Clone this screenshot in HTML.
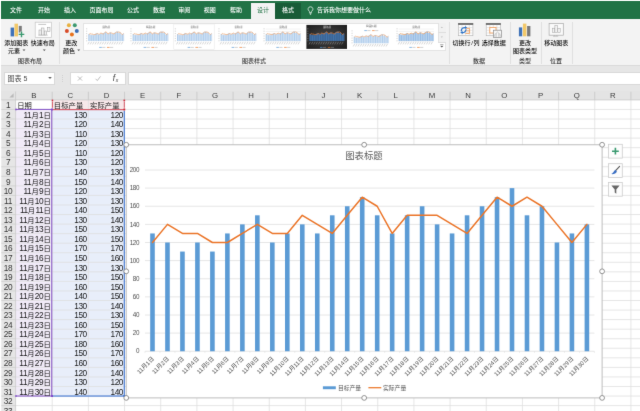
<!DOCTYPE html>
<html lang="zh-CN">
<head>
<meta charset="utf-8">
<title>Excel 图表</title>
<style>
html,body{margin:0;padding:0;background:#fff;}
body{width:640px;height:411px;overflow:hidden;position:relative;font-family:"Liberation Sans","Noto Sans CJK SC",sans-serif;color:#333;}
div{position:absolute;box-sizing:border-box;white-space:nowrap;}
.t{font-size:6px;line-height:8px;height:8px;text-align:center;}
.tab{color:#fff;top:6px;font-weight:500;}
.rb{color:#111;font-weight:500;}
.gl{color:#3a3a3a;font-weight:500;}
.ch{font-size:7.8px;line-height:9px;height:9px;text-align:center;color:#3a3a3a;top:91.4px;}
.rn{font-size:8.3px;letter-spacing:-0.4px;line-height:9.5px;height:9.5px;text-align:center;color:#333;left:1.2px;width:13.6px;}
.c{font-size:7.3px;line-height:9.5px;height:9.5px;color:#151515;}
.n{font-size:8.3px;letter-spacing:-0.45px;}
.k{font-size:7.3px;letter-spacing:0.3px;margin-left:0.2px;}
.r{text-align:right;}
.sep{width:1px;background:#e0e0e0;top:22px;height:41.5px;}
#w{left:-8px;top:-8px;width:656px;height:427px;overflow:hidden;background:#fff;will-change:transform;filter:url(#bf);}
#v{left:8px;top:8px;width:640px;height:411px;}
svg{position:absolute;left:0;top:0;}
svg text{font-family:"Liberation Sans","Noto Sans CJK SC",sans-serif;}
</style>
</head>
<body>
<svg width="0" height="0" style="position:absolute"><filter id="bf" x="0" y="0" width="100%" height="100%" color-interpolation-filters="sRGB"><feConvolveMatrix order="3" kernelMatrix="0.0064 0.0672 0.0064 0.0672 0.7056 0.0672 0.0064 0.0672 0.0064" divisor="1" edgeMode="duplicate" preserveAlpha="true"/></filter></svg>
<div id="w"><div id="v">

<div style="left:1.3px;top:1px;width:650px;height:17.8px;background:#217346"></div>
<div class="t tab" style="left:-4.0px;width:40px">文件</div>
<div class="t tab" style="left:24.0px;width:40px">开始</div>
<div class="t tab" style="left:50.0px;width:40px">插入</div>
<div class="t tab" style="left:81.5px;width:40px">页面布局</div>
<div class="t tab" style="left:113.0px;width:40px">公式</div>
<div class="t tab" style="left:139.0px;width:40px">数据</div>
<div class="t tab" style="left:164.3px;width:40px">审阅</div>
<div class="t tab" style="left:189.7px;width:40px">视图</div>
<div class="t tab" style="left:216.0px;width:40px">帮助</div>
<div style="left:250.6px;top:3px;width:24.6px;height:16px;background:#f3f3f3"></div>
<div class="t" style="left:243px;width:40px;top:6px;color:#217346">设计</div>
<div style="left:275.2px;top:3px;width:25.4px;height:15.8px;background:#185c37"></div>
<div class="t tab" style="left:268px;width:40px">格式</div>
<div class="t tab" style="left:317px;width:70px;text-align:left">告诉我你想要做什么</div>
<div style="left:1.3px;top:18.8px;width:650px;height:47px;background:#f3f3f3"></div>
<div style="left:1.3px;top:65.6px;width:650px;height:34.3px;background:#e6e6e6"></div>
<div style="left:1.3px;top:90.8px;width:650px;height:9.1px;background:#e4e4e4"></div>
<div style="left:1.3px;top:65.2px;width:650px;height:1px;background:#dadada"></div>
<div class="sep" style="left:58.7px"></div>
<div class="sep" style="left:449.4px"></div>
<div class="sep" style="left:509.7px"></div>
<div class="sep" style="left:540.6px"></div>
<div class="sep" style="left:571.9px"></div>
<div class="t rb" style="left:-13.8px;top:39.0px;width:60px">添加图表</div>
<div class="t rb" style="left:-16.0px;top:46.6px;width:60px">元素</div>
<div class="t rb" style="left:12.8px;top:39.0px;width:60px">快速布局</div>
<div class="t gl" style="left:0.0px;top:56.6px;width:60px">图表布局</div>
<div class="t rb" style="left:41.3px;top:39.0px;width:60px">更改</div>
<div class="t rb" style="left:39.0px;top:46.6px;width:60px">颜色</div>
<div class="t gl" style="left:224.0px;top:56.6px;width:60px">图表样式</div>
<div class="t rb" style="left:436.0px;top:39.0px;width:60px">切换行<span style="padding:0 0.6px">/</span>列</div>
<div class="t rb" style="left:463.8px;top:39.0px;width:60px">选择数据</div>
<div class="t gl" style="left:449.0px;top:57.0px;width:60px">数据</div>
<div class="t rb" style="left:495.0px;top:39.0px;width:60px">更改</div>
<div class="t rb" style="left:495.0px;top:46.6px;width:60px">图表类型</div>
<div class="t gl" style="left:495.0px;top:57.0px;width:60px">类型</div>
<div class="t rb" style="left:526.2px;top:39.0px;width:60px">移动图表</div>
<div class="t gl" style="left:526.0px;top:57.0px;width:60px">位置</div>
<div style="left:83px;top:22.5px;width:362.6px;height:28.2px;background:#fff;border:1px solid #e3e3e3"></div>
<div style="left:438px;top:22.5px;width:7.6px;height:19.6px;background:#f1f1f1;border-left:1px solid #e3e3e3"></div>
<div style="left:438px;top:32px;width:7.6px;height:1px;background:#dedede"></div>
<div style="left:438px;top:42px;width:7.6px;height:1px;background:#dedede"></div>
<div style="left:4.4px;top:71.5px;width:50.4px;height:13.8px;background:#fff;border:1px solid #d9d9d9"></div>
<div class="c" style="left:7.5px;top:74.2px;font-size:7px;color:#4a4a4a">图表 5</div>
<div style="left:70.4px;top:71.5px;width:55.2px;height:13.8px;background:#fff;border:1px solid #d9d9d9"></div>
<div style="left:127.6px;top:71.5px;width:525px;height:13.8px;background:#fff;border:1px solid #d9d9d9"></div>
<svg width="660" height="430" viewBox="0 0 660 430" style="overflow:visible">
<rect x="1.30" y="99.90" width="14.30" height="330.00" fill="#e6e6e6"/>
<rect x="15.60" y="99.90" width="645.00" height="330.00" fill="#fff"/>
<rect x="52.20" y="99.90" width="72.34" height="9.55" fill="#f8e8ea"/>
<rect x="15.60" y="109.45" width="36.60" height="286.59" fill="#f1ebf8"/>
<rect x="52.20" y="109.45" width="72.34" height="286.59" fill="#e8eefa"/>
<path d="M15.60 109.45H660M15.60 119.01H660M15.60 128.56H660M15.60 138.11H660M15.60 147.67H660M15.60 157.22H660M15.60 166.77H660M15.60 176.32H660M15.60 185.88H660M15.60 195.43H660M15.60 204.98H660M15.60 214.54H660M15.60 224.09H660M15.60 233.64H660M15.60 243.20H660M15.60 252.75H660M15.60 262.30H660M15.60 271.85H660M15.60 281.41H660M15.60 290.96H660M15.60 300.51H660M15.60 310.07H660M15.60 319.62H660M15.60 329.17H660M15.60 338.73H660M15.60 348.28H660M15.60 357.83H660M15.60 367.38H660M15.60 376.94H660M15.60 386.49H660M15.60 396.04H660M15.60 405.60H660M15.60 415.15H660M15.60 424.70H660" stroke="#dedede" stroke-width="0.75" fill="none"/>
<path d="M52.20 99.90V430M88.37 99.90V430M124.54 99.90V430M160.71 99.90V430M196.88 99.90V430M233.05 99.90V430M269.22 99.90V430M305.39 99.90V430M341.56 99.90V430M377.73 99.90V430M413.90 99.90V430M450.07 99.90V430M486.24 99.90V430M522.41 99.90V430M558.58 99.90V430M594.75 99.90V430M630.92 99.90V430M667.09 99.90V430" stroke="#dedede" stroke-width="0.75" fill="none"/>
<path d="M1.3 109.45H15.60M1.3 119.01H15.60M1.3 128.56H15.60M1.3 138.11H15.60M1.3 147.67H15.60M1.3 157.22H15.60M1.3 166.77H15.60M1.3 176.32H15.60M1.3 185.88H15.60M1.3 195.43H15.60M1.3 204.98H15.60M1.3 214.54H15.60M1.3 224.09H15.60M1.3 233.64H15.60M1.3 243.20H15.60M1.3 252.75H15.60M1.3 262.30H15.60M1.3 271.85H15.60M1.3 281.41H15.60M1.3 290.96H15.60M1.3 300.51H15.60M1.3 310.07H15.60M1.3 319.62H15.60M1.3 329.17H15.60M1.3 338.73H15.60M1.3 348.28H15.60M1.3 357.83H15.60M1.3 367.38H15.60M1.3 376.94H15.60M1.3 386.49H15.60M1.3 396.04H15.60M1.3 405.60H15.60M1.3 415.15H15.60M1.3 424.70H15.60" stroke="#cccccc" stroke-width="0.7" fill="none"/>
<path d="M15.60 91.50V430" stroke="#c6c6c6" stroke-width="0.8" fill="none"/>
<path d="M52.20 91.8V99.90M88.37 91.8V99.90M124.54 91.8V99.90M160.71 91.8V99.90M196.88 91.8V99.90M233.05 91.8V99.90M269.22 91.8V99.90M305.39 91.8V99.90M341.56 91.8V99.90M377.73 91.8V99.90M413.90 91.8V99.90M450.07 91.8V99.90M486.24 91.8V99.90M522.41 91.8V99.90M558.58 91.8V99.90M594.75 91.8V99.90M630.92 91.8V99.90M667.09 91.8V99.90" stroke="#c4c4c4" stroke-width="0.75" fill="none"/>
<path d="M1.3 99.90H660" stroke="#c8c8c8" stroke-width="0.8" fill="none"/>
<rect x="15.60" y="108.90" width="36.60" height="1.10" fill="#8b5ec9"/>
<rect x="51.20" y="109.45" width="1.10" height="286.59" fill="#8b5ec9"/>
<rect x="15.60" y="395.49" width="36.60" height="1.10" fill="#8b5ec9"/>
<rect x="52.20" y="109.00" width="72.34" height="1.20" fill="#d65f6c"/>
<rect x="51.90" y="101.60" width="1.05" height="6.15" fill="#d65f6c"/>
<rect x="123.79" y="101.60" width="1.05" height="6.15" fill="#d65f6c"/>
<rect x="123.74" y="110.85" width="1.10" height="285.19" fill="#4278d4"/>
<rect x="52.20" y="395.49" width="72.34" height="1.10" fill="#4278d4"/>
<rect x="51.10" y="108.50" width="1.90" height="1.90" fill="#7d45c9"/>
<rect x="15.40" y="108.60" width="1.20" height="1.70" fill="#7d45c9"/>
<rect x="51.10" y="395.09" width="1.90" height="1.90" fill="#7d45c9"/>
<rect x="15.40" y="395.19" width="1.20" height="1.70" fill="#7d45c9"/>
<rect x="51.70" y="99.60" width="1.50" height="1.60" fill="#cf2f3f"/>
<rect x="123.44" y="99.60" width="1.70" height="1.60" fill="#cf2f3f"/>
<rect x="123.44" y="108.50" width="1.80" height="1.90" fill="#cf1f30"/>
<rect x="123.34" y="395.04" width="1.90" height="1.90" fill="#3b6fd0"/>
</svg>
<div class="ch" style="left:15.6px;width:36.6px">B</div>
<div class="ch" style="left:52.2px;width:36.2px">C</div>
<div class="ch" style="left:88.4px;width:36.2px">D</div>
<div class="ch" style="left:124.5px;width:36.2px">E</div>
<div class="ch" style="left:160.7px;width:36.2px">F</div>
<div class="ch" style="left:196.9px;width:36.2px">G</div>
<div class="ch" style="left:233.1px;width:36.2px">H</div>
<div class="ch" style="left:269.2px;width:36.2px">I</div>
<div class="ch" style="left:305.4px;width:36.2px">J</div>
<div class="ch" style="left:341.6px;width:36.2px">K</div>
<div class="ch" style="left:377.7px;width:36.2px">L</div>
<div class="ch" style="left:413.9px;width:36.2px">M</div>
<div class="ch" style="left:450.1px;width:36.2px">N</div>
<div class="ch" style="left:486.2px;width:36.2px">O</div>
<div class="ch" style="left:522.4px;width:36.2px">P</div>
<div class="ch" style="left:558.6px;width:36.2px">Q</div>
<div class="ch" style="left:594.8px;width:36.2px">R</div>
<div class="rn" style="top:101.10px">1</div>
<div class="rn" style="top:110.65px">2</div>
<div class="rn" style="top:120.21px">3</div>
<div class="rn" style="top:129.76px">4</div>
<div class="rn" style="top:139.31px">5</div>
<div class="rn" style="top:148.87px">6</div>
<div class="rn" style="top:158.42px">7</div>
<div class="rn" style="top:167.97px">8</div>
<div class="rn" style="top:177.52px">9</div>
<div class="rn" style="top:187.08px">10</div>
<div class="rn" style="top:196.63px">11</div>
<div class="rn" style="top:206.18px">12</div>
<div class="rn" style="top:215.74px">13</div>
<div class="rn" style="top:225.29px">14</div>
<div class="rn" style="top:234.84px">15</div>
<div class="rn" style="top:244.40px">16</div>
<div class="rn" style="top:253.95px">17</div>
<div class="rn" style="top:263.50px">18</div>
<div class="rn" style="top:273.05px">19</div>
<div class="rn" style="top:282.61px">20</div>
<div class="rn" style="top:292.16px">21</div>
<div class="rn" style="top:301.71px">22</div>
<div class="rn" style="top:311.27px">23</div>
<div class="rn" style="top:320.82px">24</div>
<div class="rn" style="top:330.37px">25</div>
<div class="rn" style="top:339.93px">26</div>
<div class="rn" style="top:349.48px">27</div>
<div class="rn" style="top:359.03px">28</div>
<div class="rn" style="top:368.58px">29</div>
<div class="rn" style="top:378.14px">30</div>
<div class="rn" style="top:387.69px">31</div>
<div class="rn" style="top:397.24px">32</div>
<div class="rn" style="top:406.80px">33</div>
<div class="c" style="left:17.3px;top:101.10px">日期</div>
<div class="c" style="left:53.8px;top:101.10px;letter-spacing:0.1px">目标产量</div>
<div class="c" style="left:90.0px;top:101.10px;letter-spacing:0.1px">实际产量</div>
<div class="c n r" style="left:15.6px;width:35.4px;top:110.65px">11<span class="k">月</span>1<span class="k">日</span></div>
<div class="c n r" style="left:52.2px;width:34.6px;top:110.65px">130</div>
<div class="c n r" style="left:88.4px;width:34.6px;top:110.65px">120</div>
<div class="c n r" style="left:15.6px;width:35.4px;top:120.21px">11<span class="k">月</span>2<span class="k">日</span></div>
<div class="c n r" style="left:52.2px;width:34.6px;top:120.21px">120</div>
<div class="c n r" style="left:88.4px;width:34.6px;top:120.21px">140</div>
<div class="c n r" style="left:15.6px;width:35.4px;top:129.76px">11<span class="k">月</span>3<span class="k">日</span></div>
<div class="c n r" style="left:52.2px;width:34.6px;top:129.76px">110</div>
<div class="c n r" style="left:88.4px;width:34.6px;top:129.76px">130</div>
<div class="c n r" style="left:15.6px;width:35.4px;top:139.31px">11<span class="k">月</span>4<span class="k">日</span></div>
<div class="c n r" style="left:52.2px;width:34.6px;top:139.31px">120</div>
<div class="c n r" style="left:88.4px;width:34.6px;top:139.31px">130</div>
<div class="c n r" style="left:15.6px;width:35.4px;top:148.87px">11<span class="k">月</span>5<span class="k">日</span></div>
<div class="c n r" style="left:52.2px;width:34.6px;top:148.87px">110</div>
<div class="c n r" style="left:88.4px;width:34.6px;top:148.87px">120</div>
<div class="c n r" style="left:15.6px;width:35.4px;top:158.42px">11<span class="k">月</span>6<span class="k">日</span></div>
<div class="c n r" style="left:52.2px;width:34.6px;top:158.42px">130</div>
<div class="c n r" style="left:88.4px;width:34.6px;top:158.42px">120</div>
<div class="c n r" style="left:15.6px;width:35.4px;top:167.97px">11<span class="k">月</span>7<span class="k">日</span></div>
<div class="c n r" style="left:52.2px;width:34.6px;top:167.97px">140</div>
<div class="c n r" style="left:88.4px;width:34.6px;top:167.97px">130</div>
<div class="c n r" style="left:15.6px;width:35.4px;top:177.52px">11<span class="k">月</span>8<span class="k">日</span></div>
<div class="c n r" style="left:52.2px;width:34.6px;top:177.52px">150</div>
<div class="c n r" style="left:88.4px;width:34.6px;top:177.52px">140</div>
<div class="c n r" style="left:15.6px;width:35.4px;top:187.08px">11<span class="k">月</span>9<span class="k">日</span></div>
<div class="c n r" style="left:52.2px;width:34.6px;top:187.08px">120</div>
<div class="c n r" style="left:88.4px;width:34.6px;top:187.08px">130</div>
<div class="c n r" style="left:15.6px;width:35.4px;top:196.63px">11<span class="k">月</span>10<span class="k">日</span></div>
<div class="c n r" style="left:52.2px;width:34.6px;top:196.63px">130</div>
<div class="c n r" style="left:88.4px;width:34.6px;top:196.63px">130</div>
<div class="c n r" style="left:15.6px;width:35.4px;top:206.18px">11<span class="k">月</span>11<span class="k">日</span></div>
<div class="c n r" style="left:52.2px;width:34.6px;top:206.18px">140</div>
<div class="c n r" style="left:88.4px;width:34.6px;top:206.18px">150</div>
<div class="c n r" style="left:15.6px;width:35.4px;top:215.74px">11<span class="k">月</span>12<span class="k">日</span></div>
<div class="c n r" style="left:52.2px;width:34.6px;top:215.74px">130</div>
<div class="c n r" style="left:88.4px;width:34.6px;top:215.74px">140</div>
<div class="c n r" style="left:15.6px;width:35.4px;top:225.29px">11<span class="k">月</span>13<span class="k">日</span></div>
<div class="c n r" style="left:52.2px;width:34.6px;top:225.29px">150</div>
<div class="c n r" style="left:88.4px;width:34.6px;top:225.29px">130</div>
<div class="c n r" style="left:15.6px;width:35.4px;top:234.84px">11<span class="k">月</span>14<span class="k">日</span></div>
<div class="c n r" style="left:52.2px;width:34.6px;top:234.84px">160</div>
<div class="c n r" style="left:88.4px;width:34.6px;top:234.84px">150</div>
<div class="c n r" style="left:15.6px;width:35.4px;top:244.40px">11<span class="k">月</span>15<span class="k">日</span></div>
<div class="c n r" style="left:52.2px;width:34.6px;top:244.40px">170</div>
<div class="c n r" style="left:88.4px;width:34.6px;top:244.40px">170</div>
<div class="c n r" style="left:15.6px;width:35.4px;top:253.95px">11<span class="k">月</span>16<span class="k">日</span></div>
<div class="c n r" style="left:52.2px;width:34.6px;top:253.95px">150</div>
<div class="c n r" style="left:88.4px;width:34.6px;top:253.95px">160</div>
<div class="c n r" style="left:15.6px;width:35.4px;top:263.50px">11<span class="k">月</span>17<span class="k">日</span></div>
<div class="c n r" style="left:52.2px;width:34.6px;top:263.50px">130</div>
<div class="c n r" style="left:88.4px;width:34.6px;top:263.50px">130</div>
<div class="c n r" style="left:15.6px;width:35.4px;top:273.05px">11<span class="k">月</span>18<span class="k">日</span></div>
<div class="c n r" style="left:52.2px;width:34.6px;top:273.05px">150</div>
<div class="c n r" style="left:88.4px;width:34.6px;top:273.05px">150</div>
<div class="c n r" style="left:15.6px;width:35.4px;top:282.61px">11<span class="k">月</span>19<span class="k">日</span></div>
<div class="c n r" style="left:52.2px;width:34.6px;top:282.61px">160</div>
<div class="c n r" style="left:88.4px;width:34.6px;top:282.61px">150</div>
<div class="c n r" style="left:15.6px;width:35.4px;top:292.16px">11<span class="k">月</span>20<span class="k">日</span></div>
<div class="c n r" style="left:52.2px;width:34.6px;top:292.16px">140</div>
<div class="c n r" style="left:88.4px;width:34.6px;top:292.16px">150</div>
<div class="c n r" style="left:15.6px;width:35.4px;top:301.71px">11<span class="k">月</span>21<span class="k">日</span></div>
<div class="c n r" style="left:52.2px;width:34.6px;top:301.71px">130</div>
<div class="c n r" style="left:88.4px;width:34.6px;top:301.71px">140</div>
<div class="c n r" style="left:15.6px;width:35.4px;top:311.27px">11<span class="k">月</span>22<span class="k">日</span></div>
<div class="c n r" style="left:52.2px;width:34.6px;top:311.27px">150</div>
<div class="c n r" style="left:88.4px;width:34.6px;top:311.27px">130</div>
<div class="c n r" style="left:15.6px;width:35.4px;top:320.82px">11<span class="k">月</span>23<span class="k">日</span></div>
<div class="c n r" style="left:52.2px;width:34.6px;top:320.82px">160</div>
<div class="c n r" style="left:88.4px;width:34.6px;top:320.82px">150</div>
<div class="c n r" style="left:15.6px;width:35.4px;top:330.37px">11<span class="k">月</span>24<span class="k">日</span></div>
<div class="c n r" style="left:52.2px;width:34.6px;top:330.37px">170</div>
<div class="c n r" style="left:88.4px;width:34.6px;top:330.37px">170</div>
<div class="c n r" style="left:15.6px;width:35.4px;top:339.93px">11<span class="k">月</span>25<span class="k">日</span></div>
<div class="c n r" style="left:52.2px;width:34.6px;top:339.93px">180</div>
<div class="c n r" style="left:88.4px;width:34.6px;top:339.93px">160</div>
<div class="c n r" style="left:15.6px;width:35.4px;top:349.48px">11<span class="k">月</span>26<span class="k">日</span></div>
<div class="c n r" style="left:52.2px;width:34.6px;top:349.48px">150</div>
<div class="c n r" style="left:88.4px;width:34.6px;top:349.48px">170</div>
<div class="c n r" style="left:15.6px;width:35.4px;top:359.03px">11<span class="k">月</span>27<span class="k">日</span></div>
<div class="c n r" style="left:52.2px;width:34.6px;top:359.03px">160</div>
<div class="c n r" style="left:88.4px;width:34.6px;top:359.03px">160</div>
<div class="c n r" style="left:15.6px;width:35.4px;top:368.58px">11<span class="k">月</span>28<span class="k">日</span></div>
<div class="c n r" style="left:52.2px;width:34.6px;top:368.58px">120</div>
<div class="c n r" style="left:88.4px;width:34.6px;top:368.58px">140</div>
<div class="c n r" style="left:15.6px;width:35.4px;top:378.14px">11<span class="k">月</span>29<span class="k">日</span></div>
<div class="c n r" style="left:52.2px;width:34.6px;top:378.14px">130</div>
<div class="c n r" style="left:88.4px;width:34.6px;top:378.14px">120</div>
<div class="c n r" style="left:15.6px;width:35.4px;top:387.69px">11<span class="k">月</span>30<span class="k">日</span></div>
<div class="c n r" style="left:52.2px;width:34.6px;top:387.69px">140</div>
<div class="c n r" style="left:88.4px;width:34.6px;top:387.69px">140</div>
<svg width="640" height="411" viewBox="0 0 640 411">
<rect x="126.25" y="144.75" width="475.85" height="253.15" fill="#fff" stroke="#bdbdbd" stroke-width="1"/>
<line x1="145.0" x2="594.4" y1="351.25" y2="351.25" stroke="#e6e6e6" stroke-width="1"/>
<text x="139.1" y="353.45" font-size="6.3" letter-spacing="-0.35" fill="#4f4f4f" text-anchor="end">0</text>
<line x1="145.0" x2="594.4" y1="333.12" y2="333.12" stroke="#e6e6e6" stroke-width="1"/>
<text x="139.1" y="335.32" font-size="6.3" letter-spacing="-0.35" fill="#4f4f4f" text-anchor="end">20</text>
<line x1="145.0" x2="594.4" y1="315.00" y2="315.00" stroke="#e6e6e6" stroke-width="1"/>
<text x="139.1" y="317.20" font-size="6.3" letter-spacing="-0.35" fill="#4f4f4f" text-anchor="end">40</text>
<line x1="145.0" x2="594.4" y1="296.88" y2="296.88" stroke="#e6e6e6" stroke-width="1"/>
<text x="139.1" y="299.07" font-size="6.3" letter-spacing="-0.35" fill="#4f4f4f" text-anchor="end">60</text>
<line x1="145.0" x2="594.4" y1="278.75" y2="278.75" stroke="#e6e6e6" stroke-width="1"/>
<text x="139.1" y="280.95" font-size="6.3" letter-spacing="-0.35" fill="#4f4f4f" text-anchor="end">80</text>
<line x1="145.0" x2="594.4" y1="260.62" y2="260.62" stroke="#e6e6e6" stroke-width="1"/>
<text x="139.1" y="262.82" font-size="6.3" letter-spacing="-0.35" fill="#4f4f4f" text-anchor="end">100</text>
<line x1="145.0" x2="594.4" y1="242.50" y2="242.50" stroke="#e6e6e6" stroke-width="1"/>
<text x="139.1" y="244.70" font-size="6.3" letter-spacing="-0.35" fill="#4f4f4f" text-anchor="end">120</text>
<line x1="145.0" x2="594.4" y1="224.38" y2="224.38" stroke="#e6e6e6" stroke-width="1"/>
<text x="139.1" y="226.57" font-size="6.3" letter-spacing="-0.35" fill="#4f4f4f" text-anchor="end">140</text>
<line x1="145.0" x2="594.4" y1="206.25" y2="206.25" stroke="#e6e6e6" stroke-width="1"/>
<text x="139.1" y="208.45" font-size="6.3" letter-spacing="-0.35" fill="#4f4f4f" text-anchor="end">160</text>
<line x1="145.0" x2="594.4" y1="188.12" y2="188.12" stroke="#e6e6e6" stroke-width="1"/>
<text x="139.1" y="190.32" font-size="6.3" letter-spacing="-0.35" fill="#4f4f4f" text-anchor="end">180</text>
<line x1="145.0" x2="594.4" y1="170.00" y2="170.00" stroke="#e6e6e6" stroke-width="1"/>
<text x="139.1" y="172.20" font-size="6.3" letter-spacing="-0.35" fill="#4f4f4f" text-anchor="end">200</text>
<rect x="150.19" y="233.44" width="4.6" height="117.81" fill="#5b9bd5"/>
<rect x="165.17" y="242.50" width="4.6" height="108.75" fill="#5b9bd5"/>
<rect x="180.15" y="251.56" width="4.6" height="99.69" fill="#5b9bd5"/>
<rect x="195.13" y="242.50" width="4.6" height="108.75" fill="#5b9bd5"/>
<rect x="210.11" y="251.56" width="4.6" height="99.69" fill="#5b9bd5"/>
<rect x="225.09" y="233.44" width="4.6" height="117.81" fill="#5b9bd5"/>
<rect x="240.07" y="224.38" width="4.6" height="126.88" fill="#5b9bd5"/>
<rect x="255.05" y="215.31" width="4.6" height="135.94" fill="#5b9bd5"/>
<rect x="270.03" y="242.50" width="4.6" height="108.75" fill="#5b9bd5"/>
<rect x="285.01" y="233.44" width="4.6" height="117.81" fill="#5b9bd5"/>
<rect x="299.99" y="224.38" width="4.6" height="126.88" fill="#5b9bd5"/>
<rect x="314.97" y="233.44" width="4.6" height="117.81" fill="#5b9bd5"/>
<rect x="329.95" y="215.31" width="4.6" height="135.94" fill="#5b9bd5"/>
<rect x="344.93" y="206.25" width="4.6" height="145.00" fill="#5b9bd5"/>
<rect x="359.91" y="197.19" width="4.6" height="154.06" fill="#5b9bd5"/>
<rect x="374.89" y="215.31" width="4.6" height="135.94" fill="#5b9bd5"/>
<rect x="389.87" y="233.44" width="4.6" height="117.81" fill="#5b9bd5"/>
<rect x="404.85" y="215.31" width="4.6" height="135.94" fill="#5b9bd5"/>
<rect x="419.83" y="206.25" width="4.6" height="145.00" fill="#5b9bd5"/>
<rect x="434.81" y="224.38" width="4.6" height="126.88" fill="#5b9bd5"/>
<rect x="449.79" y="233.44" width="4.6" height="117.81" fill="#5b9bd5"/>
<rect x="464.77" y="215.31" width="4.6" height="135.94" fill="#5b9bd5"/>
<rect x="479.75" y="206.25" width="4.6" height="145.00" fill="#5b9bd5"/>
<rect x="494.73" y="197.19" width="4.6" height="154.06" fill="#5b9bd5"/>
<rect x="509.71" y="188.12" width="4.6" height="163.12" fill="#5b9bd5"/>
<rect x="524.69" y="215.31" width="4.6" height="135.94" fill="#5b9bd5"/>
<rect x="539.67" y="206.25" width="4.6" height="145.00" fill="#5b9bd5"/>
<rect x="554.65" y="242.50" width="4.6" height="108.75" fill="#5b9bd5"/>
<rect x="569.63" y="233.44" width="4.6" height="117.81" fill="#5b9bd5"/>
<rect x="584.61" y="224.38" width="4.6" height="126.88" fill="#5b9bd5"/>
<polyline points="152.49,242.50 167.47,224.38 182.45,233.44 197.43,233.44 212.41,242.50 227.39,242.50 242.37,233.44 257.35,224.38 272.33,233.44 287.31,233.44 302.29,215.31 317.27,224.38 332.25,233.44 347.23,215.31 362.21,197.19 377.19,206.25 392.17,233.44 407.15,215.31 422.13,215.31 437.11,215.31 452.09,224.38 467.07,233.44 482.05,215.31 497.03,197.19 512.01,206.25 526.99,197.19 541.97,206.25 556.95,224.38 571.93,242.50 586.91,224.38" fill="none" stroke="#eb7529" stroke-width="1.5" stroke-linejoin="round" stroke-linecap="round"/>
<text transform="translate(154.39,359.20) rotate(-45)" font-size="5.9" fill="#505050" text-anchor="end">11月1日</text>
<text transform="translate(169.37,359.20) rotate(-45)" font-size="5.9" fill="#505050" text-anchor="end">11月2日</text>
<text transform="translate(184.35,359.20) rotate(-45)" font-size="5.9" fill="#505050" text-anchor="end">11月3日</text>
<text transform="translate(199.33,359.20) rotate(-45)" font-size="5.9" fill="#505050" text-anchor="end">11月4日</text>
<text transform="translate(214.31,359.20) rotate(-45)" font-size="5.9" fill="#505050" text-anchor="end">11月5日</text>
<text transform="translate(229.29,359.20) rotate(-45)" font-size="5.9" fill="#505050" text-anchor="end">11月6日</text>
<text transform="translate(244.27,359.20) rotate(-45)" font-size="5.9" fill="#505050" text-anchor="end">11月7日</text>
<text transform="translate(259.25,359.20) rotate(-45)" font-size="5.9" fill="#505050" text-anchor="end">11月8日</text>
<text transform="translate(274.23,359.20) rotate(-45)" font-size="5.9" fill="#505050" text-anchor="end">11月9日</text>
<text transform="translate(289.21,359.20) rotate(-45)" font-size="5.9" fill="#505050" text-anchor="end">11月10日</text>
<text transform="translate(304.19,359.20) rotate(-45)" font-size="5.9" fill="#505050" text-anchor="end">11月11日</text>
<text transform="translate(319.17,359.20) rotate(-45)" font-size="5.9" fill="#505050" text-anchor="end">11月12日</text>
<text transform="translate(334.15,359.20) rotate(-45)" font-size="5.9" fill="#505050" text-anchor="end">11月13日</text>
<text transform="translate(349.13,359.20) rotate(-45)" font-size="5.9" fill="#505050" text-anchor="end">11月14日</text>
<text transform="translate(364.11,359.20) rotate(-45)" font-size="5.9" fill="#505050" text-anchor="end">11月15日</text>
<text transform="translate(379.09,359.20) rotate(-45)" font-size="5.9" fill="#505050" text-anchor="end">11月16日</text>
<text transform="translate(394.07,359.20) rotate(-45)" font-size="5.9" fill="#505050" text-anchor="end">11月17日</text>
<text transform="translate(409.05,359.20) rotate(-45)" font-size="5.9" fill="#505050" text-anchor="end">11月18日</text>
<text transform="translate(424.03,359.20) rotate(-45)" font-size="5.9" fill="#505050" text-anchor="end">11月19日</text>
<text transform="translate(439.01,359.20) rotate(-45)" font-size="5.9" fill="#505050" text-anchor="end">11月20日</text>
<text transform="translate(453.99,359.20) rotate(-45)" font-size="5.9" fill="#505050" text-anchor="end">11月21日</text>
<text transform="translate(468.97,359.20) rotate(-45)" font-size="5.9" fill="#505050" text-anchor="end">11月22日</text>
<text transform="translate(483.95,359.20) rotate(-45)" font-size="5.9" fill="#505050" text-anchor="end">11月23日</text>
<text transform="translate(498.93,359.20) rotate(-45)" font-size="5.9" fill="#505050" text-anchor="end">11月24日</text>
<text transform="translate(513.91,359.20) rotate(-45)" font-size="5.9" fill="#505050" text-anchor="end">11月25日</text>
<text transform="translate(528.89,359.20) rotate(-45)" font-size="5.9" fill="#505050" text-anchor="end">11月26日</text>
<text transform="translate(543.87,359.20) rotate(-45)" font-size="5.9" fill="#505050" text-anchor="end">11月27日</text>
<text transform="translate(558.85,359.20) rotate(-45)" font-size="5.9" fill="#505050" text-anchor="end">11月28日</text>
<text transform="translate(573.83,359.20) rotate(-45)" font-size="5.9" fill="#505050" text-anchor="end">11月29日</text>
<text transform="translate(588.81,359.20) rotate(-45)" font-size="5.9" fill="#505050" text-anchor="end">11月30日</text>
<text x="364" y="159" font-size="9.4" fill="#595959" text-anchor="middle">图表标题</text>
<rect x="322.9" y="386.3" width="12.9" height="2.9" fill="#5b9bd5"/>
<text x="337.9" y="389.9" font-size="5.8" fill="#595959">目标产量</text>
<line x1="368.4" x2="381.3" y1="387.7" y2="387.7" stroke="#ed7d31" stroke-width="1.3"/>
<text x="383" y="389.9" font-size="5.8" fill="#595959">实际产量</text>
<line x1="145.00" x2="145.00" y1="351.25" y2="352.85" stroke="#dedede" stroke-width="0.6"/>
<line x1="159.98" x2="159.98" y1="351.25" y2="352.85" stroke="#dedede" stroke-width="0.6"/>
<line x1="174.96" x2="174.96" y1="351.25" y2="352.85" stroke="#dedede" stroke-width="0.6"/>
<line x1="189.94" x2="189.94" y1="351.25" y2="352.85" stroke="#dedede" stroke-width="0.6"/>
<line x1="204.92" x2="204.92" y1="351.25" y2="352.85" stroke="#dedede" stroke-width="0.6"/>
<line x1="219.90" x2="219.90" y1="351.25" y2="352.85" stroke="#dedede" stroke-width="0.6"/>
<line x1="234.88" x2="234.88" y1="351.25" y2="352.85" stroke="#dedede" stroke-width="0.6"/>
<line x1="249.86" x2="249.86" y1="351.25" y2="352.85" stroke="#dedede" stroke-width="0.6"/>
<line x1="264.84" x2="264.84" y1="351.25" y2="352.85" stroke="#dedede" stroke-width="0.6"/>
<line x1="279.82" x2="279.82" y1="351.25" y2="352.85" stroke="#dedede" stroke-width="0.6"/>
<line x1="294.80" x2="294.80" y1="351.25" y2="352.85" stroke="#dedede" stroke-width="0.6"/>
<line x1="309.78" x2="309.78" y1="351.25" y2="352.85" stroke="#dedede" stroke-width="0.6"/>
<line x1="324.76" x2="324.76" y1="351.25" y2="352.85" stroke="#dedede" stroke-width="0.6"/>
<line x1="339.74" x2="339.74" y1="351.25" y2="352.85" stroke="#dedede" stroke-width="0.6"/>
<line x1="354.72" x2="354.72" y1="351.25" y2="352.85" stroke="#dedede" stroke-width="0.6"/>
<line x1="369.70" x2="369.70" y1="351.25" y2="352.85" stroke="#dedede" stroke-width="0.6"/>
<line x1="384.68" x2="384.68" y1="351.25" y2="352.85" stroke="#dedede" stroke-width="0.6"/>
<line x1="399.66" x2="399.66" y1="351.25" y2="352.85" stroke="#dedede" stroke-width="0.6"/>
<line x1="414.64" x2="414.64" y1="351.25" y2="352.85" stroke="#dedede" stroke-width="0.6"/>
<line x1="429.62" x2="429.62" y1="351.25" y2="352.85" stroke="#dedede" stroke-width="0.6"/>
<line x1="444.60" x2="444.60" y1="351.25" y2="352.85" stroke="#dedede" stroke-width="0.6"/>
<line x1="459.58" x2="459.58" y1="351.25" y2="352.85" stroke="#dedede" stroke-width="0.6"/>
<line x1="474.56" x2="474.56" y1="351.25" y2="352.85" stroke="#dedede" stroke-width="0.6"/>
<line x1="489.54" x2="489.54" y1="351.25" y2="352.85" stroke="#dedede" stroke-width="0.6"/>
<line x1="504.52" x2="504.52" y1="351.25" y2="352.85" stroke="#dedede" stroke-width="0.6"/>
<line x1="519.50" x2="519.50" y1="351.25" y2="352.85" stroke="#dedede" stroke-width="0.6"/>
<line x1="534.48" x2="534.48" y1="351.25" y2="352.85" stroke="#dedede" stroke-width="0.6"/>
<line x1="549.46" x2="549.46" y1="351.25" y2="352.85" stroke="#dedede" stroke-width="0.6"/>
<line x1="564.44" x2="564.44" y1="351.25" y2="352.85" stroke="#dedede" stroke-width="0.6"/>
<line x1="579.42" x2="579.42" y1="351.25" y2="352.85" stroke="#dedede" stroke-width="0.6"/>
<line x1="594.40" x2="594.40" y1="351.25" y2="352.85" stroke="#dedede" stroke-width="0.6"/>
<circle cx="126.25" cy="144.75" r="2.4" fill="#fff" stroke="#7a7a7a" stroke-width="0.8"/>
<circle cx="364.18" cy="144.75" r="2.4" fill="#fff" stroke="#7a7a7a" stroke-width="0.8"/>
<circle cx="602.10" cy="144.75" r="2.4" fill="#fff" stroke="#7a7a7a" stroke-width="0.8"/>
<circle cx="126.25" cy="271.32" r="2.4" fill="#fff" stroke="#7a7a7a" stroke-width="0.8"/>
<circle cx="602.10" cy="271.32" r="2.4" fill="#fff" stroke="#7a7a7a" stroke-width="0.8"/>
<circle cx="126.25" cy="397.90" r="2.4" fill="#fff" stroke="#7a7a7a" stroke-width="0.8"/>
<circle cx="364.18" cy="397.90" r="2.4" fill="#fff" stroke="#7a7a7a" stroke-width="0.8"/>
<circle cx="602.10" cy="397.90" r="2.4" fill="#fff" stroke="#7a7a7a" stroke-width="0.8"/>
</svg>
<svg width="640" height="411" viewBox="0 0 640 411">
<path d="M310.5 6.8a2.3 2.3 0 0 1 1.4 4.2c-.3.3-.4.6-.4 1v.6h-2v-.6c0-.4-.1-.7-.4-1a2.3 2.3 0 0 1 1.4-4.2z" fill="none" stroke="#fff" stroke-width="0.7"/>
<path d="M309.6 13.5h1.8M309.9 14.5h1.2" stroke="#fff" stroke-width="0.6" fill="none"/>
<rect x="10.6" y="27.6" width="3.5" height="8.8" fill="#3f72b8"/>
<rect x="14.5" y="23.7" width="3.5" height="12.7" fill="#f2c869"/>
<rect x="18.8" y="25.9" width="3.0" height="6.6" fill="#7a7a7a"/>
<path d="M21.5 31.4v6M18.5 34.4h6" stroke="#f3f3f3" stroke-width="2.6" fill="none"/>
<path d="M21.5 31.6v5.6M18.7 34.4h5.6" stroke="#3a9a70" stroke-width="1.4" fill="none"/>
<rect x="35.2" y="22.2" width="16.4" height="15.4" fill="#fff" stroke="#c4c4c4" stroke-width="0.7"/>
<path d="M38.3 24.4h7.8" stroke="#9a9a9a" stroke-width="0.6"/>
<path d="M38 35.2h10" stroke="#b5b5b5" stroke-width="0.5"/>
<rect x="39.0" y="30.0" width="2.2" height="5.0" fill="#f4f4f4" stroke="#9a9a9a" stroke-width="0.5"/>
<rect x="41.6" y="28.0" width="2.4" height="7.0" fill="#f4f4f4" stroke="#9a9a9a" stroke-width="0.5"/>
<rect x="44.4" y="31.0" width="2.2" height="4.0" fill="#f4f4f4" stroke="#9a9a9a" stroke-width="0.5"/>
<rect x="47.6" y="27.6" width="2.4" height="3.8" fill="#f4f4f4" stroke="#9a9a9a" stroke-width="0.5"/>
<path d="M22.55 49.57h2.90l-1.45 1.45z" fill="#4a4a4a"/>
<path d="M42.85 49.57h2.90l-1.45 1.45z" fill="#4a4a4a"/>
<path d="M77.25 49.57h2.90l-1.45 1.45z" fill="#4a4a4a"/>
<circle cx="68.9" cy="25.3" r="2" fill="#e8b040"/>
<circle cx="74.8" cy="25.3" r="2" fill="#3d9970"/>
<circle cx="66.9" cy="31.1" r="2" fill="#d84a27"/>
<circle cx="76.8" cy="31.1" r="2" fill="#3a6db5"/>
<circle cx="71.9" cy="34.4" r="2" fill="#e8721c"/>
<path d="M440.6 28l1.2-1.2 1.2 1.2z" fill="#bdbdbd"/>
<path d="M440.6 36.6h2.4l-1.2 1.2z" fill="#bdbdbd"/>
<path d="M440.2 44.8h3.2" stroke="#555" stroke-width="0.6"/>
<path d="M440.3 46h3l-1.5 1.6z" fill="#555"/>
<polygon points="88.30,41.10 88.40,34.08 89.40,34.08 89.60,34.62 90.59,34.62 90.79,35.16 91.79,35.16 91.99,34.62 92.99,34.62 93.19,35.16 94.18,35.16 94.38,34.08 95.38,34.08 95.58,33.54 96.58,33.54 96.78,33.00 97.77,33.00 97.97,34.62 98.97,34.62 99.17,34.08 100.17,34.08 100.37,33.54 101.36,33.54 101.56,34.08 102.56,34.08 102.76,33.00 103.76,33.00 103.96,32.46 104.95,32.46 105.15,31.92 106.15,31.92 106.35,33.00 107.35,33.00 107.55,34.08 108.54,34.08 108.74,33.00 109.74,33.00 109.94,32.46 110.94,32.46 111.14,33.54 112.13,33.54 112.33,34.08 113.33,34.08 113.53,33.00 114.53,33.00 114.73,32.46 115.72,32.46 115.92,31.92 116.92,31.92 117.12,31.38 118.12,31.38 118.32,33.00 119.31,33.00 119.51,32.46 120.51,32.46 120.71,34.62 121.71,34.62 121.91,34.08 122.90,34.08 123.10,33.54 124.10,33.54 124.20,41.10" fill="#dce9f7"/>
<path d="M88.90 41.10V34.08M91.29 41.10V35.16M93.69 41.10V35.16M96.08 41.10V33.54M98.47 41.10V34.62M100.86 41.10V33.54M103.26 41.10V33.00M105.65 41.10V31.92M108.05 41.10V34.08M110.44 41.10V32.46M112.83 41.10V34.08M115.22 41.10V32.46M117.62 41.10V31.38M120.01 41.10V32.46M122.41 41.10V34.08" stroke="#a8c8ea" stroke-width="0.9" fill="none"/>
<path d="M90.09 41.10V34.62M92.49 41.10V34.62M94.88 41.10V34.08M97.28 41.10V33.00M99.67 41.10V34.08M102.06 41.10V34.08M104.45 41.10V32.46M106.85 41.10V33.00M109.24 41.10V33.00M111.63 41.10V33.54M114.03 41.10V33.00M116.42 41.10V31.92M118.81 41.10V33.00M121.21 41.10V34.62M123.60 41.10V33.54" stroke="#a8c8ea" stroke-width="0.6" fill="none" opacity="0.55"/>
<polyline points="88.90,34.62 90.09,33.54 91.29,34.08 92.49,34.08 93.69,34.62 94.88,34.62 96.08,34.08 97.28,33.54 98.47,34.08 99.67,34.08 100.86,33.00 102.06,33.54 103.26,34.08 104.45,33.00 105.65,31.92 106.85,32.46 108.05,34.08 109.24,33.00 110.44,33.00 111.63,33.00 112.83,33.54 114.03,34.08 115.22,33.00 116.42,31.92 117.62,32.46 118.81,31.92 120.01,32.46 121.21,33.54 122.41,34.62 123.60,33.54" fill="none" stroke="#f2ab78" stroke-width="0.75" stroke-linejoin="round"/>
<path d="M86.1 40.80h1.1" stroke="#a5a5a5" stroke-width="0.5"/>
<path d="M86.1 38.40h1.1" stroke="#a5a5a5" stroke-width="0.5"/>
<path d="M86.1 36.00h1.1" stroke="#a5a5a5" stroke-width="0.5"/>
<path d="M86.1 33.60h1.1" stroke="#a5a5a5" stroke-width="0.5"/>
<path d="M86.1 31.20h1.1" stroke="#a5a5a5" stroke-width="0.5"/>
<path d="M86.1 28.80h1.1" stroke="#a5a5a5" stroke-width="0.5"/>
<path d="M89.30 41.80l-1.5 2.6M91.69 41.80l-1.5 2.6M94.09 41.80l-1.5 2.6M96.48 41.80l-1.5 2.6M98.87 41.80l-1.5 2.6M101.27 41.80l-1.5 2.6M103.66 41.80l-1.5 2.6M106.05 41.80l-1.5 2.6M108.45 41.80l-1.5 2.6M110.84 41.80l-1.5 2.6M113.23 41.80l-1.5 2.6M115.62 41.80l-1.5 2.6M118.02 41.80l-1.5 2.6M120.41 41.80l-1.5 2.6M122.81 41.80l-1.5 2.6" stroke="#a5a5a5" stroke-width="0.45" fill="none"/>
<text x="106.2" y="27.8" font-size="1.9" font-weight="900" fill="#555" text-anchor="middle" opacity="0.62">图表标题</text>
<path d="M99.2 47.4h2.6" stroke="#5b9bd5" stroke-width="0.7"/>
<path d="M102.2 47.4h3.2" stroke="#a5a5a5" stroke-width="0.5"/>
<path d="M107.0 47.4h2.6" stroke="#ed7d31" stroke-width="0.7"/>
<path d="M110.0 47.4h3.2" stroke="#a5a5a5" stroke-width="0.5"/>
<polygon points="132.60,41.10 132.70,34.08 133.70,34.08 133.90,34.62 134.89,34.62 135.09,35.16 136.09,35.16 136.29,34.62 137.29,34.62 137.49,35.16 138.48,35.16 138.68,34.08 139.68,34.08 139.88,33.54 140.88,33.54 141.08,33.00 142.07,33.00 142.27,34.62 143.27,34.62 143.47,34.08 144.47,34.08 144.67,33.54 145.66,33.54 145.86,34.08 146.86,34.08 147.06,33.00 148.06,33.00 148.26,32.46 149.25,32.46 149.45,31.92 150.45,31.92 150.65,33.00 151.65,33.00 151.85,34.08 152.84,34.08 153.04,33.00 154.04,33.00 154.24,32.46 155.24,32.46 155.44,33.54 156.43,33.54 156.63,34.08 157.63,34.08 157.83,33.00 158.83,33.00 159.03,32.46 160.02,32.46 160.22,31.92 161.22,31.92 161.42,31.38 162.42,31.38 162.62,33.00 163.61,33.00 163.81,32.46 164.81,32.46 165.01,34.62 166.01,34.62 166.21,34.08 167.20,34.08 167.40,33.54 168.40,33.54 168.50,41.10" fill="#dce9f7"/>
<path d="M133.20 41.10V34.08M135.59 41.10V35.16M137.98 41.10V35.16M140.38 41.10V33.54M142.77 41.10V34.62M145.16 41.10V33.54M147.56 41.10V33.00M149.95 41.10V31.92M152.34 41.10V34.08M154.74 41.10V32.46M157.13 41.10V34.08M159.53 41.10V32.46M161.92 41.10V31.38M164.31 41.10V32.46M166.70 41.10V34.08" stroke="#a8c8ea" stroke-width="0.9" fill="none"/>
<path d="M134.39 41.10V34.62M136.79 41.10V34.62M139.18 41.10V34.08M141.57 41.10V33.00M143.97 41.10V34.08M146.36 41.10V34.08M148.75 41.10V32.46M151.15 41.10V33.00M153.54 41.10V33.00M155.94 41.10V33.54M158.33 41.10V33.00M160.72 41.10V31.92M163.12 41.10V33.00M165.51 41.10V34.62M167.90 41.10V33.54" stroke="#a8c8ea" stroke-width="0.6" fill="none" opacity="0.55"/>
<polyline points="133.20,34.62 134.39,33.54 135.59,34.08 136.79,34.08 137.98,34.62 139.18,34.62 140.38,34.08 141.57,33.54 142.77,34.08 143.97,34.08 145.16,33.00 146.36,33.54 147.56,34.08 148.75,33.00 149.95,31.92 151.15,32.46 152.34,34.08 153.54,33.00 154.74,33.00 155.94,33.00 157.13,33.54 158.33,34.08 159.53,33.00 160.72,31.92 161.92,32.46 163.12,31.92 164.31,32.46 165.51,33.54 166.70,34.62 167.90,33.54" fill="none" stroke="#f2ab78" stroke-width="0.75" stroke-linejoin="round"/>
<path d="M130.4 40.80h1.1" stroke="#a5a5a5" stroke-width="0.5"/>
<path d="M130.4 38.40h1.1" stroke="#a5a5a5" stroke-width="0.5"/>
<path d="M130.4 36.00h1.1" stroke="#a5a5a5" stroke-width="0.5"/>
<path d="M130.4 33.60h1.1" stroke="#a5a5a5" stroke-width="0.5"/>
<path d="M130.4 31.20h1.1" stroke="#a5a5a5" stroke-width="0.5"/>
<path d="M130.4 28.80h1.1" stroke="#a5a5a5" stroke-width="0.5"/>
<path d="M133.60 41.80l-1.5 2.6M135.99 41.80l-1.5 2.6M138.38 41.80l-1.5 2.6M140.78 41.80l-1.5 2.6M143.17 41.80l-1.5 2.6M145.56 41.80l-1.5 2.6M147.96 41.80l-1.5 2.6M150.35 41.80l-1.5 2.6M152.75 41.80l-1.5 2.6M155.14 41.80l-1.5 2.6M157.53 41.80l-1.5 2.6M159.93 41.80l-1.5 2.6M162.32 41.80l-1.5 2.6M164.71 41.80l-1.5 2.6M167.10 41.80l-1.5 2.6" stroke="#a5a5a5" stroke-width="0.45" fill="none"/>
<text x="150.6" y="27.8" font-size="2.3" font-weight="900" fill="#555" text-anchor="middle" opacity="0.62">图表标题</text>
<path d="M143.6 47.4h2.6" stroke="#5b9bd5" stroke-width="0.7"/>
<path d="M146.6 47.4h3.2" stroke="#a5a5a5" stroke-width="0.5"/>
<path d="M151.4 47.4h2.6" stroke="#ed7d31" stroke-width="0.7"/>
<path d="M154.4 47.4h3.2" stroke="#a5a5a5" stroke-width="0.5"/>
<rect x="173.8" y="24" width="40.4" height="25.4" fill="none" stroke="#e4e4e4" stroke-width="0.5"/>
<polygon points="177.00,41.10 177.10,34.08 178.07,34.08 178.27,34.62 179.25,34.62 179.45,35.16 180.42,35.16 180.62,34.62 181.59,34.62 181.79,35.16 182.77,35.16 182.97,34.08 183.94,34.08 184.14,33.54 185.11,33.54 185.31,33.00 186.29,33.00 186.49,34.62 187.46,34.62 187.66,34.08 188.63,34.08 188.83,33.54 189.81,33.54 190.01,34.08 190.98,34.08 191.18,33.00 192.15,33.00 192.35,32.46 193.33,32.46 193.53,31.92 194.50,31.92 194.70,33.00 195.67,33.00 195.87,34.08 196.85,34.08 197.05,33.00 198.02,33.00 198.22,32.46 199.19,32.46 199.39,33.54 200.37,33.54 200.57,34.08 201.54,34.08 201.74,33.00 202.71,33.00 202.91,32.46 203.89,32.46 204.09,31.92 205.06,31.92 205.26,31.38 206.23,31.38 206.43,33.00 207.41,33.00 207.61,32.46 208.58,32.46 208.78,34.62 209.75,34.62 209.95,34.08 210.93,34.08 211.13,33.54 212.10,33.54 212.20,41.10" fill="#dce9f7"/>
<path d="M177.59 41.10V34.08M179.93 41.10V35.16M182.28 41.10V35.16M184.63 41.10V33.54M186.97 41.10V34.62M189.32 41.10V33.54M191.67 41.10V33.00M194.01 41.10V31.92M196.36 41.10V34.08M198.71 41.10V32.46M201.05 41.10V34.08M203.40 41.10V32.46M205.75 41.10V31.38M208.09 41.10V32.46M210.44 41.10V34.08" stroke="#a8c8ea" stroke-width="0.9" fill="none"/>
<path d="M178.76 41.10V34.62M181.11 41.10V34.62M183.45 41.10V34.08M185.80 41.10V33.00M188.15 41.10V34.08M190.49 41.10V34.08M192.84 41.10V32.46M195.19 41.10V33.00M197.53 41.10V33.00M199.88 41.10V33.54M202.23 41.10V33.00M204.57 41.10V31.92M206.92 41.10V33.00M209.27 41.10V34.62M211.61 41.10V33.54" stroke="#a8c8ea" stroke-width="0.6" fill="none" opacity="0.55"/>
<polyline points="177.59,34.62 178.76,33.54 179.93,34.08 181.11,34.08 182.28,34.62 183.45,34.62 184.63,34.08 185.80,33.54 186.97,34.08 188.15,34.08 189.32,33.00 190.49,33.54 191.67,34.08 192.84,33.00 194.01,31.92 195.19,32.46 196.36,34.08 197.53,33.00 198.71,33.00 199.88,33.00 201.05,33.54 202.23,34.08 203.40,33.00 204.57,31.92 205.75,32.46 206.92,31.92 208.09,32.46 209.27,33.54 210.44,34.62 211.61,33.54" fill="none" stroke="#f2ab78" stroke-width="0.75" stroke-linejoin="round"/>
<path d="M174.8 40.80h1.1" stroke="#a5a5a5" stroke-width="0.5"/>
<path d="M174.8 38.40h1.1" stroke="#a5a5a5" stroke-width="0.5"/>
<path d="M174.8 36.00h1.1" stroke="#a5a5a5" stroke-width="0.5"/>
<path d="M174.8 33.60h1.1" stroke="#a5a5a5" stroke-width="0.5"/>
<path d="M174.8 31.20h1.1" stroke="#a5a5a5" stroke-width="0.5"/>
<path d="M174.8 28.80h1.1" stroke="#a5a5a5" stroke-width="0.5"/>
<path d="M177.99 41.80l-1.5 2.6M180.33 41.80l-1.5 2.6M182.68 41.80l-1.5 2.6M185.03 41.80l-1.5 2.6M187.37 41.80l-1.5 2.6M189.72 41.80l-1.5 2.6M192.07 41.80l-1.5 2.6M194.41 41.80l-1.5 2.6M196.76 41.80l-1.5 2.6M199.11 41.80l-1.5 2.6M201.45 41.80l-1.5 2.6M203.80 41.80l-1.5 2.6M206.15 41.80l-1.5 2.6M208.49 41.80l-1.5 2.6M210.84 41.80l-1.5 2.6" stroke="#a5a5a5" stroke-width="0.45" fill="none"/>
<text x="194.6" y="27.8" font-size="1.9" font-weight="900" fill="#555" text-anchor="middle" opacity="0.62">图表标题</text>
<path d="M187.6 47.4h2.6" stroke="#5b9bd5" stroke-width="0.7"/>
<path d="M190.6 47.4h3.2" stroke="#a5a5a5" stroke-width="0.5"/>
<path d="M195.4 47.4h2.6" stroke="#ed7d31" stroke-width="0.7"/>
<path d="M198.4 47.4h3.2" stroke="#a5a5a5" stroke-width="0.5"/>
<polygon points="220.60,41.10 220.70,34.08 221.70,34.08 221.90,34.62 222.89,34.62 223.09,35.16 224.09,35.16 224.29,34.62 225.29,34.62 225.49,35.16 226.48,35.16 226.68,34.08 227.68,34.08 227.88,33.54 228.88,33.54 229.08,33.00 230.07,33.00 230.27,34.62 231.27,34.62 231.47,34.08 232.47,34.08 232.67,33.54 233.66,33.54 233.86,34.08 234.86,34.08 235.06,33.00 236.06,33.00 236.26,32.46 237.25,32.46 237.45,31.92 238.45,31.92 238.65,33.00 239.65,33.00 239.85,34.08 240.84,34.08 241.04,33.00 242.04,33.00 242.24,32.46 243.24,32.46 243.44,33.54 244.43,33.54 244.63,34.08 245.63,34.08 245.83,33.00 246.83,33.00 247.03,32.46 248.02,32.46 248.22,31.92 249.22,31.92 249.42,31.38 250.42,31.38 250.62,33.00 251.61,33.00 251.81,32.46 252.81,32.46 253.01,34.62 254.01,34.62 254.21,34.08 255.20,34.08 255.40,33.54 256.40,33.54 256.50,41.10" fill="#dce9f7"/>
<path d="M221.20 41.10V34.08M223.59 41.10V35.16M225.98 41.10V35.16M228.38 41.10V33.54M230.77 41.10V34.62M233.16 41.10V33.54M235.56 41.10V33.00M237.95 41.10V31.92M240.34 41.10V34.08M242.74 41.10V32.46M245.13 41.10V34.08M247.53 41.10V32.46M249.92 41.10V31.38M252.31 41.10V32.46M254.70 41.10V34.08" stroke="#a9c8ea" stroke-width="0.9" fill="none"/>
<path d="M222.39 41.10V34.62M224.79 41.10V34.62M227.18 41.10V34.08M229.57 41.10V33.00M231.97 41.10V34.08M234.36 41.10V34.08M236.75 41.10V32.46M239.15 41.10V33.00M241.54 41.10V33.00M243.94 41.10V33.54M246.33 41.10V33.00M248.72 41.10V31.92M251.12 41.10V33.00M253.51 41.10V34.62M255.90 41.10V33.54" stroke="#a9c8ea" stroke-width="0.6" fill="none" opacity="0.55"/>
<polyline points="221.20,34.62 222.39,33.54 223.59,34.08 224.79,34.08 225.98,34.62 227.18,34.62 228.38,34.08 229.57,33.54 230.77,34.08 231.97,34.08 233.16,33.00 234.36,33.54 235.56,34.08 236.75,33.00 237.95,31.92 239.15,32.46 240.34,34.08 241.54,33.00 242.74,33.00 243.94,33.00 245.13,33.54 246.33,34.08 247.53,33.00 248.72,31.92 249.92,32.46 251.12,31.92 252.31,32.46 253.51,33.54 254.70,34.62 255.90,33.54" fill="none" stroke="#f2ab78" stroke-width="0.75" stroke-linejoin="round"/>
<path d="M218.4 40.80h1.1" stroke="#a5a5a5" stroke-width="0.5"/>
<path d="M218.4 38.40h1.1" stroke="#a5a5a5" stroke-width="0.5"/>
<path d="M218.4 36.00h1.1" stroke="#a5a5a5" stroke-width="0.5"/>
<path d="M218.4 33.60h1.1" stroke="#a5a5a5" stroke-width="0.5"/>
<path d="M218.4 31.20h1.1" stroke="#a5a5a5" stroke-width="0.5"/>
<path d="M218.4 28.80h1.1" stroke="#a5a5a5" stroke-width="0.5"/>
<path d="M221.60 41.80l-1.5 2.6M223.99 41.80l-1.5 2.6M226.38 41.80l-1.5 2.6M228.78 41.80l-1.5 2.6M231.17 41.80l-1.5 2.6M233.56 41.80l-1.5 2.6M235.96 41.80l-1.5 2.6M238.35 41.80l-1.5 2.6M240.75 41.80l-1.5 2.6M243.14 41.80l-1.5 2.6M245.53 41.80l-1.5 2.6M247.93 41.80l-1.5 2.6M250.32 41.80l-1.5 2.6M252.71 41.80l-1.5 2.6M255.10 41.80l-1.5 2.6" stroke="#a5a5a5" stroke-width="0.45" fill="none"/>
<text x="238.6" y="27.8" font-size="1.9" font-weight="900" fill="#555" text-anchor="middle" opacity="0.62">图表标题</text>
<path d="M231.6 47.4h2.6" stroke="#5b9bd5" stroke-width="0.7"/>
<path d="M234.6 47.4h3.2" stroke="#a5a5a5" stroke-width="0.5"/>
<path d="M239.4 47.4h2.6" stroke="#ed7d31" stroke-width="0.7"/>
<path d="M242.4 47.4h3.2" stroke="#a5a5a5" stroke-width="0.5"/>
<path d="M265.7 41.10h35.2" stroke="#dcdcdc" stroke-width="0.35"/>
<path d="M265.7 38.70h35.2" stroke="#dcdcdc" stroke-width="0.35"/>
<path d="M265.7 36.30h35.2" stroke="#dcdcdc" stroke-width="0.35"/>
<path d="M265.7 33.90h35.2" stroke="#dcdcdc" stroke-width="0.35"/>
<path d="M265.7 31.50h35.2" stroke="#dcdcdc" stroke-width="0.35"/>
<path d="M265.7 29.10h35.2" stroke="#dcdcdc" stroke-width="0.35"/>
<polygon points="265.70,41.10 265.80,34.08 266.77,34.08 266.97,34.62 267.95,34.62 268.15,35.16 269.12,35.16 269.32,34.62 270.29,34.62 270.49,35.16 271.47,35.16 271.67,34.08 272.64,34.08 272.84,33.54 273.81,33.54 274.01,33.00 274.99,33.00 275.19,34.62 276.16,34.62 276.36,34.08 277.33,34.08 277.53,33.54 278.51,33.54 278.71,34.08 279.68,34.08 279.88,33.00 280.85,33.00 281.05,32.46 282.03,32.46 282.23,31.92 283.20,31.92 283.40,33.00 284.37,33.00 284.57,34.08 285.55,34.08 285.75,33.00 286.72,33.00 286.92,32.46 287.89,32.46 288.09,33.54 289.07,33.54 289.27,34.08 290.24,34.08 290.44,33.00 291.41,33.00 291.61,32.46 292.59,32.46 292.79,31.92 293.76,31.92 293.96,31.38 294.93,31.38 295.13,33.00 296.11,33.00 296.31,32.46 297.28,32.46 297.48,34.62 298.45,34.62 298.65,34.08 299.63,34.08 299.83,33.54 300.80,33.54 300.90,41.10" fill="#dce9f7"/>
<path d="M266.29 41.10V34.08M268.63 41.10V35.16M270.98 41.10V35.16M273.33 41.10V33.54M275.67 41.10V34.62M278.02 41.10V33.54M280.37 41.10V33.00M282.71 41.10V31.92M285.06 41.10V34.08M287.41 41.10V32.46M289.75 41.10V34.08M292.10 41.10V32.46M294.45 41.10V31.38M296.79 41.10V32.46M299.14 41.10V34.08" stroke="#a8c8ea" stroke-width="0.9" fill="none"/>
<path d="M267.46 41.10V34.62M269.81 41.10V34.62M272.15 41.10V34.08M274.50 41.10V33.00M276.85 41.10V34.08M279.19 41.10V34.08M281.54 41.10V32.46M283.89 41.10V33.00M286.23 41.10V33.00M288.58 41.10V33.54M290.93 41.10V33.00M293.27 41.10V31.92M295.62 41.10V33.00M297.97 41.10V34.62M300.31 41.10V33.54" stroke="#a8c8ea" stroke-width="0.6" fill="none" opacity="0.55"/>
<polyline points="266.29,34.62 267.46,33.54 268.63,34.08 269.81,34.08 270.98,34.62 272.15,34.62 273.33,34.08 274.50,33.54 275.67,34.08 276.85,34.08 278.02,33.00 279.19,33.54 280.37,34.08 281.54,33.00 282.71,31.92 283.89,32.46 285.06,34.08 286.23,33.00 287.41,33.00 288.58,33.00 289.75,33.54 290.93,34.08 292.10,33.00 293.27,31.92 294.45,32.46 295.62,31.92 296.79,32.46 297.97,33.54 299.14,34.62 300.31,33.54" fill="none" stroke="#f2ab78" stroke-width="0.75" stroke-linejoin="round"/>
<path d="M263.5 40.80h1.1" stroke="#a5a5a5" stroke-width="0.5"/>
<path d="M263.5 38.40h1.1" stroke="#a5a5a5" stroke-width="0.5"/>
<path d="M263.5 36.00h1.1" stroke="#a5a5a5" stroke-width="0.5"/>
<path d="M263.5 33.60h1.1" stroke="#a5a5a5" stroke-width="0.5"/>
<path d="M263.5 31.20h1.1" stroke="#a5a5a5" stroke-width="0.5"/>
<path d="M263.5 28.80h1.1" stroke="#a5a5a5" stroke-width="0.5"/>
<path d="M266.69 41.80l-1.5 2.6M269.03 41.80l-1.5 2.6M271.38 41.80l-1.5 2.6M273.73 41.80l-1.5 2.6M276.07 41.80l-1.5 2.6M278.42 41.80l-1.5 2.6M280.77 41.80l-1.5 2.6M283.11 41.80l-1.5 2.6M285.46 41.80l-1.5 2.6M287.81 41.80l-1.5 2.6M290.15 41.80l-1.5 2.6M292.50 41.80l-1.5 2.6M294.85 41.80l-1.5 2.6M297.19 41.80l-1.5 2.6M299.54 41.80l-1.5 2.6" stroke="#a5a5a5" stroke-width="0.45" fill="none"/>
<text x="283.3" y="27.8" font-size="1.9" font-weight="900" fill="#555" text-anchor="middle" opacity="0.62">图表标题</text>
<path d="M276.3 47.4h2.6" stroke="#5b9bd5" stroke-width="0.7"/>
<path d="M279.3 47.4h3.2" stroke="#a5a5a5" stroke-width="0.5"/>
<path d="M284.1 47.4h2.6" stroke="#ed7d31" stroke-width="0.7"/>
<path d="M287.1 47.4h3.2" stroke="#a5a5a5" stroke-width="0.5"/>
<defs><radialGradient id="dg" cx="50%" cy="50%" r="70%"><stop offset="0" stop-color="#474747"/><stop offset="1" stop-color="#1c1c1c"/></radialGradient></defs>
<rect x="306.4" y="24.9" width="40.6" height="24" fill="url(#dg)"/>
<polygon points="309.50,41.10 309.60,34.08 310.57,34.08 310.77,34.62 311.73,34.62 311.93,35.16 312.90,35.16 313.10,34.62 314.07,34.62 314.27,35.16 315.23,35.16 315.43,34.08 316.40,34.08 316.60,33.54 317.57,33.54 317.77,33.00 318.73,33.00 318.93,34.62 319.90,34.62 320.10,34.08 321.07,34.08 321.27,33.54 322.23,33.54 322.43,34.08 323.40,34.08 323.60,33.00 324.57,33.00 324.77,32.46 325.73,32.46 325.93,31.92 326.90,31.92 327.10,33.00 328.07,33.00 328.27,34.08 329.23,34.08 329.43,33.00 330.40,33.00 330.60,32.46 331.57,32.46 331.77,33.54 332.73,33.54 332.93,34.08 333.90,34.08 334.10,33.00 335.07,33.00 335.27,32.46 336.23,32.46 336.43,31.92 337.40,31.92 337.60,31.38 338.57,31.38 338.77,33.00 339.73,33.00 339.93,32.46 340.90,32.46 341.10,34.62 342.07,34.62 342.27,34.08 343.23,34.08 343.43,33.54 344.40,33.54 344.50,41.10" fill="#3a5f8a"/>
<path d="M310.08 41.10V34.08M312.42 41.10V35.16M314.75 41.10V35.16M317.08 41.10V33.54M319.42 41.10V34.62M321.75 41.10V33.54M324.08 41.10V33.00M326.42 41.10V31.92M328.75 41.10V34.08M331.08 41.10V32.46M333.42 41.10V34.08M335.75 41.10V32.46M338.08 41.10V31.38M340.42 41.10V32.46M342.75 41.10V34.08" stroke="#4478b3" stroke-width="0.9" fill="none"/>
<path d="M311.25 41.10V34.62M313.58 41.10V34.62M315.92 41.10V34.08M318.25 41.10V33.00M320.58 41.10V34.08M322.92 41.10V34.08M325.25 41.10V32.46M327.58 41.10V33.00M329.92 41.10V33.00M332.25 41.10V33.54M334.58 41.10V33.00M336.92 41.10V31.92M339.25 41.10V33.00M341.58 41.10V34.62M343.92 41.10V33.54" stroke="#4478b3" stroke-width="0.6" fill="none" opacity="0.55"/>
<polyline points="310.08,34.62 311.25,33.54 312.42,34.08 313.58,34.08 314.75,34.62 315.92,34.62 317.08,34.08 318.25,33.54 319.42,34.08 320.58,34.08 321.75,33.00 322.92,33.54 324.08,34.08 325.25,33.00 326.42,31.92 327.58,32.46 328.75,34.08 329.92,33.00 331.08,33.00 332.25,33.00 333.42,33.54 334.58,34.08 335.75,33.00 336.92,31.92 338.08,32.46 339.25,31.92 340.42,32.46 341.58,33.54 342.75,34.62 343.92,33.54" fill="none" stroke="#e27a31" stroke-width="0.75" stroke-linejoin="round"/>
<path d="M307.3 40.80h1.1" stroke="#a8a8a8" stroke-width="0.5"/>
<path d="M307.3 38.40h1.1" stroke="#a8a8a8" stroke-width="0.5"/>
<path d="M307.3 36.00h1.1" stroke="#a8a8a8" stroke-width="0.5"/>
<path d="M307.3 33.60h1.1" stroke="#a8a8a8" stroke-width="0.5"/>
<path d="M307.3 31.20h1.1" stroke="#a8a8a8" stroke-width="0.5"/>
<path d="M307.3 28.80h1.1" stroke="#a8a8a8" stroke-width="0.5"/>
<path d="M310.48 41.80l-1.5 2.6M312.82 41.80l-1.5 2.6M315.15 41.80l-1.5 2.6M317.48 41.80l-1.5 2.6M319.82 41.80l-1.5 2.6M322.15 41.80l-1.5 2.6M324.48 41.80l-1.5 2.6M326.82 41.80l-1.5 2.6M329.15 41.80l-1.5 2.6M331.48 41.80l-1.5 2.6M333.82 41.80l-1.5 2.6M336.15 41.80l-1.5 2.6M338.48 41.80l-1.5 2.6M340.82 41.80l-1.5 2.6M343.15 41.80l-1.5 2.6" stroke="#a8a8a8" stroke-width="0.45" fill="none"/>
<text x="327.0" y="27.8" font-size="1.9" font-weight="900" fill="#f0f0f0" text-anchor="middle" opacity="0.62">图表标题</text>
<path d="M320.0 47.4h2.6" stroke="#5b9bd5" stroke-width="0.7"/>
<path d="M323.0 47.4h3.2" stroke="#a8a8a8" stroke-width="0.5"/>
<path d="M327.8 47.4h2.6" stroke="#ed7d31" stroke-width="0.7"/>
<path d="M330.8 47.4h3.2" stroke="#a8a8a8" stroke-width="0.5"/>
<polygon points="353.70,43.20 353.80,36.70 354.77,36.70 354.97,37.20 355.95,37.20 356.15,37.70 357.12,37.70 357.32,37.20 358.29,37.20 358.49,37.70 359.47,37.70 359.67,36.70 360.64,36.70 360.84,36.20 361.81,36.20 362.01,35.70 362.99,35.70 363.19,37.20 364.16,37.20 364.36,36.70 365.33,36.70 365.53,36.20 366.51,36.20 366.71,36.70 367.68,36.70 367.88,35.70 368.85,35.70 369.05,35.20 370.03,35.20 370.23,34.70 371.20,34.70 371.40,35.70 372.37,35.70 372.57,36.70 373.55,36.70 373.75,35.70 374.72,35.70 374.92,35.20 375.89,35.20 376.09,36.20 377.07,36.20 377.27,36.70 378.24,36.70 378.44,35.70 379.41,35.70 379.61,35.20 380.59,35.20 380.79,34.70 381.76,34.70 381.96,34.20 382.93,34.20 383.13,35.70 384.11,35.70 384.31,35.20 385.28,35.20 385.48,37.20 386.45,37.20 386.65,36.70 387.63,36.70 387.83,36.20 388.80,36.20 388.90,43.20" fill="#dce9f7"/>
<path d="M354.29 43.20V36.70M356.63 43.20V37.70M358.98 43.20V37.70M361.33 43.20V36.20M363.67 43.20V37.20M366.02 43.20V36.20M368.37 43.20V35.70M370.71 43.20V34.70M373.06 43.20V36.70M375.41 43.20V35.20M377.75 43.20V36.70M380.10 43.20V35.20M382.45 43.20V34.20M384.79 43.20V35.20M387.14 43.20V36.70" stroke="#a8c8ea" stroke-width="0.9" fill="none"/>
<path d="M355.46 43.20V37.20M357.81 43.20V37.20M360.15 43.20V36.70M362.50 43.20V35.70M364.85 43.20V36.70M367.19 43.20V36.70M369.54 43.20V35.20M371.89 43.20V35.70M374.23 43.20V35.70M376.58 43.20V36.20M378.93 43.20V35.70M381.27 43.20V34.70M383.62 43.20V35.70M385.97 43.20V37.20M388.31 43.20V36.20" stroke="#a8c8ea" stroke-width="0.6" fill="none" opacity="0.55"/>
<polyline points="354.29,37.20 355.46,36.20 356.63,36.70 357.81,36.70 358.98,37.20 360.15,37.20 361.33,36.70 362.50,36.20 363.67,36.70 364.85,36.70 366.02,35.70 367.19,36.20 368.37,36.70 369.54,35.70 370.71,34.70 371.89,35.20 373.06,36.70 374.23,35.70 375.41,35.70 376.58,35.70 377.75,36.20 378.93,36.70 380.10,35.70 381.27,34.70 382.45,35.20 383.62,34.70 384.79,35.20 385.97,36.20 387.14,37.20 388.31,36.20" fill="none" stroke="#f2ab78" stroke-width="0.75" stroke-linejoin="round"/>
<path d="M351.5 42.90h1.1" stroke="#a5a5a5" stroke-width="0.5"/>
<path d="M351.5 40.50h1.1" stroke="#a5a5a5" stroke-width="0.5"/>
<path d="M351.5 38.10h1.1" stroke="#a5a5a5" stroke-width="0.5"/>
<path d="M351.5 35.70h1.1" stroke="#a5a5a5" stroke-width="0.5"/>
<path d="M351.5 33.30h1.1" stroke="#a5a5a5" stroke-width="0.5"/>
<path d="M351.5 30.90h1.1" stroke="#a5a5a5" stroke-width="0.5"/>
<path d="M354.69 43.90l-1.5 2.6M357.03 43.90l-1.5 2.6M359.38 43.90l-1.5 2.6M361.73 43.90l-1.5 2.6M364.07 43.90l-1.5 2.6M366.42 43.90l-1.5 2.6M368.77 43.90l-1.5 2.6M371.11 43.90l-1.5 2.6M373.46 43.90l-1.5 2.6M375.81 43.90l-1.5 2.6M378.15 43.90l-1.5 2.6M380.50 43.90l-1.5 2.6M382.85 43.90l-1.5 2.6M385.19 43.90l-1.5 2.6M387.54 43.90l-1.5 2.6" stroke="#a5a5a5" stroke-width="0.45" fill="none"/>
<text x="371.3" y="27.4" font-size="2.6" font-weight="900" fill="#555" text-anchor="middle" opacity="0.62">图表标题</text>
<path d="M364.3 30.6h2.6" stroke="#5b9bd5" stroke-width="0.7"/>
<path d="M367.3 30.6h3.2" stroke="#a5a5a5" stroke-width="0.5"/>
<path d="M372.1 30.6h2.6" stroke="#ed7d31" stroke-width="0.7"/>
<path d="M375.1 30.6h3.2" stroke="#a5a5a5" stroke-width="0.5"/>
<path d="M398.7 41.10h35.2" stroke="#dcdcdc" stroke-width="0.35"/>
<path d="M398.7 38.70h35.2" stroke="#dcdcdc" stroke-width="0.35"/>
<path d="M398.7 36.30h35.2" stroke="#dcdcdc" stroke-width="0.35"/>
<path d="M398.7 33.90h35.2" stroke="#dcdcdc" stroke-width="0.35"/>
<path d="M398.7 31.50h35.2" stroke="#dcdcdc" stroke-width="0.35"/>
<path d="M398.7 29.10h35.2" stroke="#dcdcdc" stroke-width="0.35"/>
<polygon points="398.70,41.10 398.80,34.08 399.77,34.08 399.97,34.62 400.95,34.62 401.15,35.16 402.12,35.16 402.32,34.62 403.29,34.62 403.49,35.16 404.47,35.16 404.67,34.08 405.64,34.08 405.84,33.54 406.81,33.54 407.01,33.00 407.99,33.00 408.19,34.62 409.16,34.62 409.36,34.08 410.33,34.08 410.53,33.54 411.51,33.54 411.71,34.08 412.68,34.08 412.88,33.00 413.85,33.00 414.05,32.46 415.03,32.46 415.23,31.92 416.20,31.92 416.40,33.00 417.37,33.00 417.57,34.08 418.55,34.08 418.75,33.00 419.72,33.00 419.92,32.46 420.89,32.46 421.09,33.54 422.07,33.54 422.27,34.08 423.24,34.08 423.44,33.00 424.41,33.00 424.61,32.46 425.59,32.46 425.79,31.92 426.76,31.92 426.96,31.38 427.93,31.38 428.13,33.00 429.11,33.00 429.31,32.46 430.28,32.46 430.48,34.62 431.45,34.62 431.65,34.08 432.63,34.08 432.83,33.54 433.80,33.54 433.90,41.10" fill="#c3d9f0"/>
<path d="M399.29 41.10V34.08M401.63 41.10V35.16M403.98 41.10V35.16M406.33 41.10V33.54M408.67 41.10V34.62M411.02 41.10V33.54M413.37 41.10V33.00M415.71 41.10V31.92M418.06 41.10V34.08M420.41 41.10V32.46M422.75 41.10V34.08M425.10 41.10V32.46M427.45 41.10V31.38M429.79 41.10V32.46M432.14 41.10V34.08" stroke="#8fb7e2" stroke-width="0.9" fill="none"/>
<path d="M400.46 41.10V34.62M402.81 41.10V34.62M405.15 41.10V34.08M407.50 41.10V33.00M409.85 41.10V34.08M412.19 41.10V34.08M414.54 41.10V32.46M416.89 41.10V33.00M419.23 41.10V33.00M421.58 41.10V33.54M423.93 41.10V33.00M426.27 41.10V31.92M428.62 41.10V33.00M430.97 41.10V34.62M433.31 41.10V33.54" stroke="#8fb7e2" stroke-width="0.6" fill="none" opacity="0.55"/>
<polyline points="399.29,34.62 400.46,33.54 401.63,34.08 402.81,34.08 403.98,34.62 405.15,34.62 406.33,34.08 407.50,33.54 408.67,34.08 409.85,34.08 411.02,33.00 412.19,33.54 413.37,34.08 414.54,33.00 415.71,31.92 416.89,32.46 418.06,34.08 419.23,33.00 420.41,33.00 421.58,33.00 422.75,33.54 423.93,34.08 425.10,33.00 426.27,31.92 427.45,32.46 428.62,31.92 429.79,32.46 430.97,33.54 432.14,34.62 433.31,33.54" fill="none" stroke="#f0a060" stroke-width="0.75" stroke-linejoin="round"/>
<path d="M396.5 40.80h1.1" stroke="#a5a5a5" stroke-width="0.5"/>
<path d="M396.5 38.40h1.1" stroke="#a5a5a5" stroke-width="0.5"/>
<path d="M396.5 36.00h1.1" stroke="#a5a5a5" stroke-width="0.5"/>
<path d="M396.5 33.60h1.1" stroke="#a5a5a5" stroke-width="0.5"/>
<path d="M396.5 31.20h1.1" stroke="#a5a5a5" stroke-width="0.5"/>
<path d="M396.5 28.80h1.1" stroke="#a5a5a5" stroke-width="0.5"/>
<path d="M399.69 41.80l-1.5 2.6M402.03 41.80l-1.5 2.6M404.38 41.80l-1.5 2.6M406.73 41.80l-1.5 2.6M409.07 41.80l-1.5 2.6M411.42 41.80l-1.5 2.6M413.77 41.80l-1.5 2.6M416.11 41.80l-1.5 2.6M418.46 41.80l-1.5 2.6M420.81 41.80l-1.5 2.6M423.15 41.80l-1.5 2.6M425.50 41.80l-1.5 2.6M427.85 41.80l-1.5 2.6M430.19 41.80l-1.5 2.6M432.54 41.80l-1.5 2.6" stroke="#a5a5a5" stroke-width="0.45" fill="none"/>
<text x="416.3" y="27.8" font-size="1.9" font-weight="900" fill="#555" text-anchor="middle" opacity="0.62">图表标题</text>
<path d="M409.3 47.4h2.6" stroke="#5b9bd5" stroke-width="0.7"/>
<path d="M412.3 47.4h3.2" stroke="#a5a5a5" stroke-width="0.5"/>
<path d="M417.1 47.4h2.6" stroke="#ed7d31" stroke-width="0.7"/>
<path d="M420.1 47.4h3.2" stroke="#a5a5a5" stroke-width="0.5"/>
<rect x="458.4" y="23.4" width="14.5" height="12.3" fill="#fff" stroke="#b0b0b0" stroke-width="0.6"/>
<rect x="458.1" y="23.1" width="15.1" height="1.8" fill="#6a6a6a"/>
<path d="M458.4 27.6h14.5" stroke="#cfcfcf" stroke-width="0.5"/>
<path d="M458.4 30.3h14.5" stroke="#cfcfcf" stroke-width="0.5"/>
<path d="M458.4 33.0h14.5" stroke="#cfcfcf" stroke-width="0.5"/>
<path d="M462.0 24.9v10.8" stroke="#cfcfcf" stroke-width="0.5"/>
<path d="M465.6 24.9v10.8" stroke="#cfcfcf" stroke-width="0.5"/>
<path d="M469.3 24.9v10.8" stroke="#cfcfcf" stroke-width="0.5"/>
<path d="M461.3 31.4C461 28.6 463.2 27.2 465.6 27.6M466.2 29.4C465.8 31.8 464 33 461.8 32.6" fill="none" stroke="#2f75c8" stroke-width="1.25"/>
<path d="M465 26.1l2.4 1.7-2.6 1.3zM462.8 34l-2.6-1.6 2.4-1.4z" fill="#2f75c8"/>
<path d="M466.2 28.4h3.4v5h-4.2M466.2 30.9h3.4" fill="none" stroke="#f0a060" stroke-width="0.9"/>
<rect x="486.2" y="23.4" width="14.3" height="12.3" fill="#fff" stroke="#b0b0b0" stroke-width="0.6"/>
<rect x="485.9" y="23.1" width="14.9" height="1.8" fill="#6a6a6a"/>
<path d="M486.2 27.6h14.3" stroke="#cfcfcf" stroke-width="0.5"/>
<path d="M486.2 30.3h14.3" stroke="#cfcfcf" stroke-width="0.5"/>
<path d="M486.2 33.0h14.3" stroke="#cfcfcf" stroke-width="0.5"/>
<path d="M489.8 24.9v10.8" stroke="#cfcfcf" stroke-width="0.5"/>
<path d="M493.3 24.9v10.8" stroke="#cfcfcf" stroke-width="0.5"/>
<path d="M496.9 24.9v10.8" stroke="#cfcfcf" stroke-width="0.5"/>
<rect x="489.8" y="27.4" width="6.2" height="5.6" fill="#fff" stroke="#f0a060" stroke-width="0.9"/>
<rect x="493.5" y="30.2" width="8" height="7.4" fill="#f7f7f7" stroke="#8a8a8a" stroke-width="0.7"/>
<path d="M494.8 36.8v-2.2l2.7-2.6 2.7 2.6v2.2M496.2 33.4v3.4M498.8 33.4v3.4" fill="none" stroke="#9a9a9a" stroke-width="0.5"/>
<rect x="518.9" y="27.4" width="3.3" height="8.9" fill="#3f72b8"/>
<rect x="522.9" y="23.6" width="3.5" height="12.7" fill="#f2c869"/>
<rect x="527.1" y="26" width="3.3" height="10.3" fill="#7a7a7a"/>
<rect x="549.1" y="23.4" width="14.2" height="11.8" fill="#fafafa" stroke="#a8a8a8" stroke-width="0.7"/>
<rect x="552.4" y="28.2" width="2.4" height="4.4" fill="#f4f4f4" stroke="#a0a0a0" stroke-width="0.5"/>
<rect x="554.9" y="25.6" width="2.8" height="7.0" fill="#f4f4f4" stroke="#a0a0a0" stroke-width="0.5"/>
<rect x="557.8" y="28.6" width="2.4" height="4.0" fill="#f4f4f4" stroke="#a0a0a0" stroke-width="0.5"/>
<path d="M553 36.2h5.2M554.4 35.2v1M556.8 35.2v1" stroke="#a8a8a8" stroke-width="0.6" fill="none"/>
<path d="M48.20 77.10h3.60l-1.80 1.80z" fill="#606060"/>
<circle cx="62.5" cy="75.4" r="0.45" fill="#b0b0b0"/>
<circle cx="62.5" cy="77.4" r="0.45" fill="#b0b0b0"/>
<circle cx="62.5" cy="79.4" r="0.45" fill="#b0b0b0"/>
<circle cx="62.5" cy="81.4" r="0.45" fill="#b0b0b0"/>
<path d="M77.9 76.4l4.2 4.2M82.1 76.4l-4.2 4.2" stroke="#a6a6a6" stroke-width="0.75" fill="none"/>
<path d="M95.6 78.8l1.7 1.8 3.2-4.2" stroke="#a6a6a6" stroke-width="0.75" fill="none"/>
<text x="112.8" y="81.2" font-size="8.2" font-style="italic" font-family="Liberation Serif,serif" fill="#3a3a3a">f</text>
<text x="115.8" y="81.6" font-size="5" font-style="italic" font-family="Liberation Serif,serif" fill="#3a3a3a">x</text>
<path d="M9.4 97.6h4.2v-4.4z" fill="#b9b9b9"/>
<rect x="608.5" y="144.3" width="13.8" height="13.8" fill="#fdfdfd" stroke="#cdcdcd" stroke-width="0.8"/>
<rect x="608.5" y="163.7" width="13.8" height="13.8" fill="#fdfdfd" stroke="#cdcdcd" stroke-width="0.8"/>
<rect x="608.5" y="182.4" width="13.8" height="13.8" fill="#fdfdfd" stroke="#cdcdcd" stroke-width="0.8"/>
<path d="M615.4 147.8v6.8M612 151.2h6.8" stroke="#3a9a70" stroke-width="1.6" fill="none"/>
<path d="M619.6 166.4l-4.2 4.4" stroke="#555" stroke-width="1.1" stroke-linecap="round"/>
<path d="M615.3 169.8l1.6 1.6c-.9 2-3 3-5.6 2.7 1.8-.7 2.3-2.8 4-4.3z" fill="#3a6fc4"/>
<path d="M611.4 185.6h8.2l-3.3 3.8v4.4l-1.6-1.2v-3.2z" fill="#666"/>
</svg>
<div style="left:0;top:0;width:1.3px;height:411px;background:#fff"></div>
</div></div>
</body>
</html>
